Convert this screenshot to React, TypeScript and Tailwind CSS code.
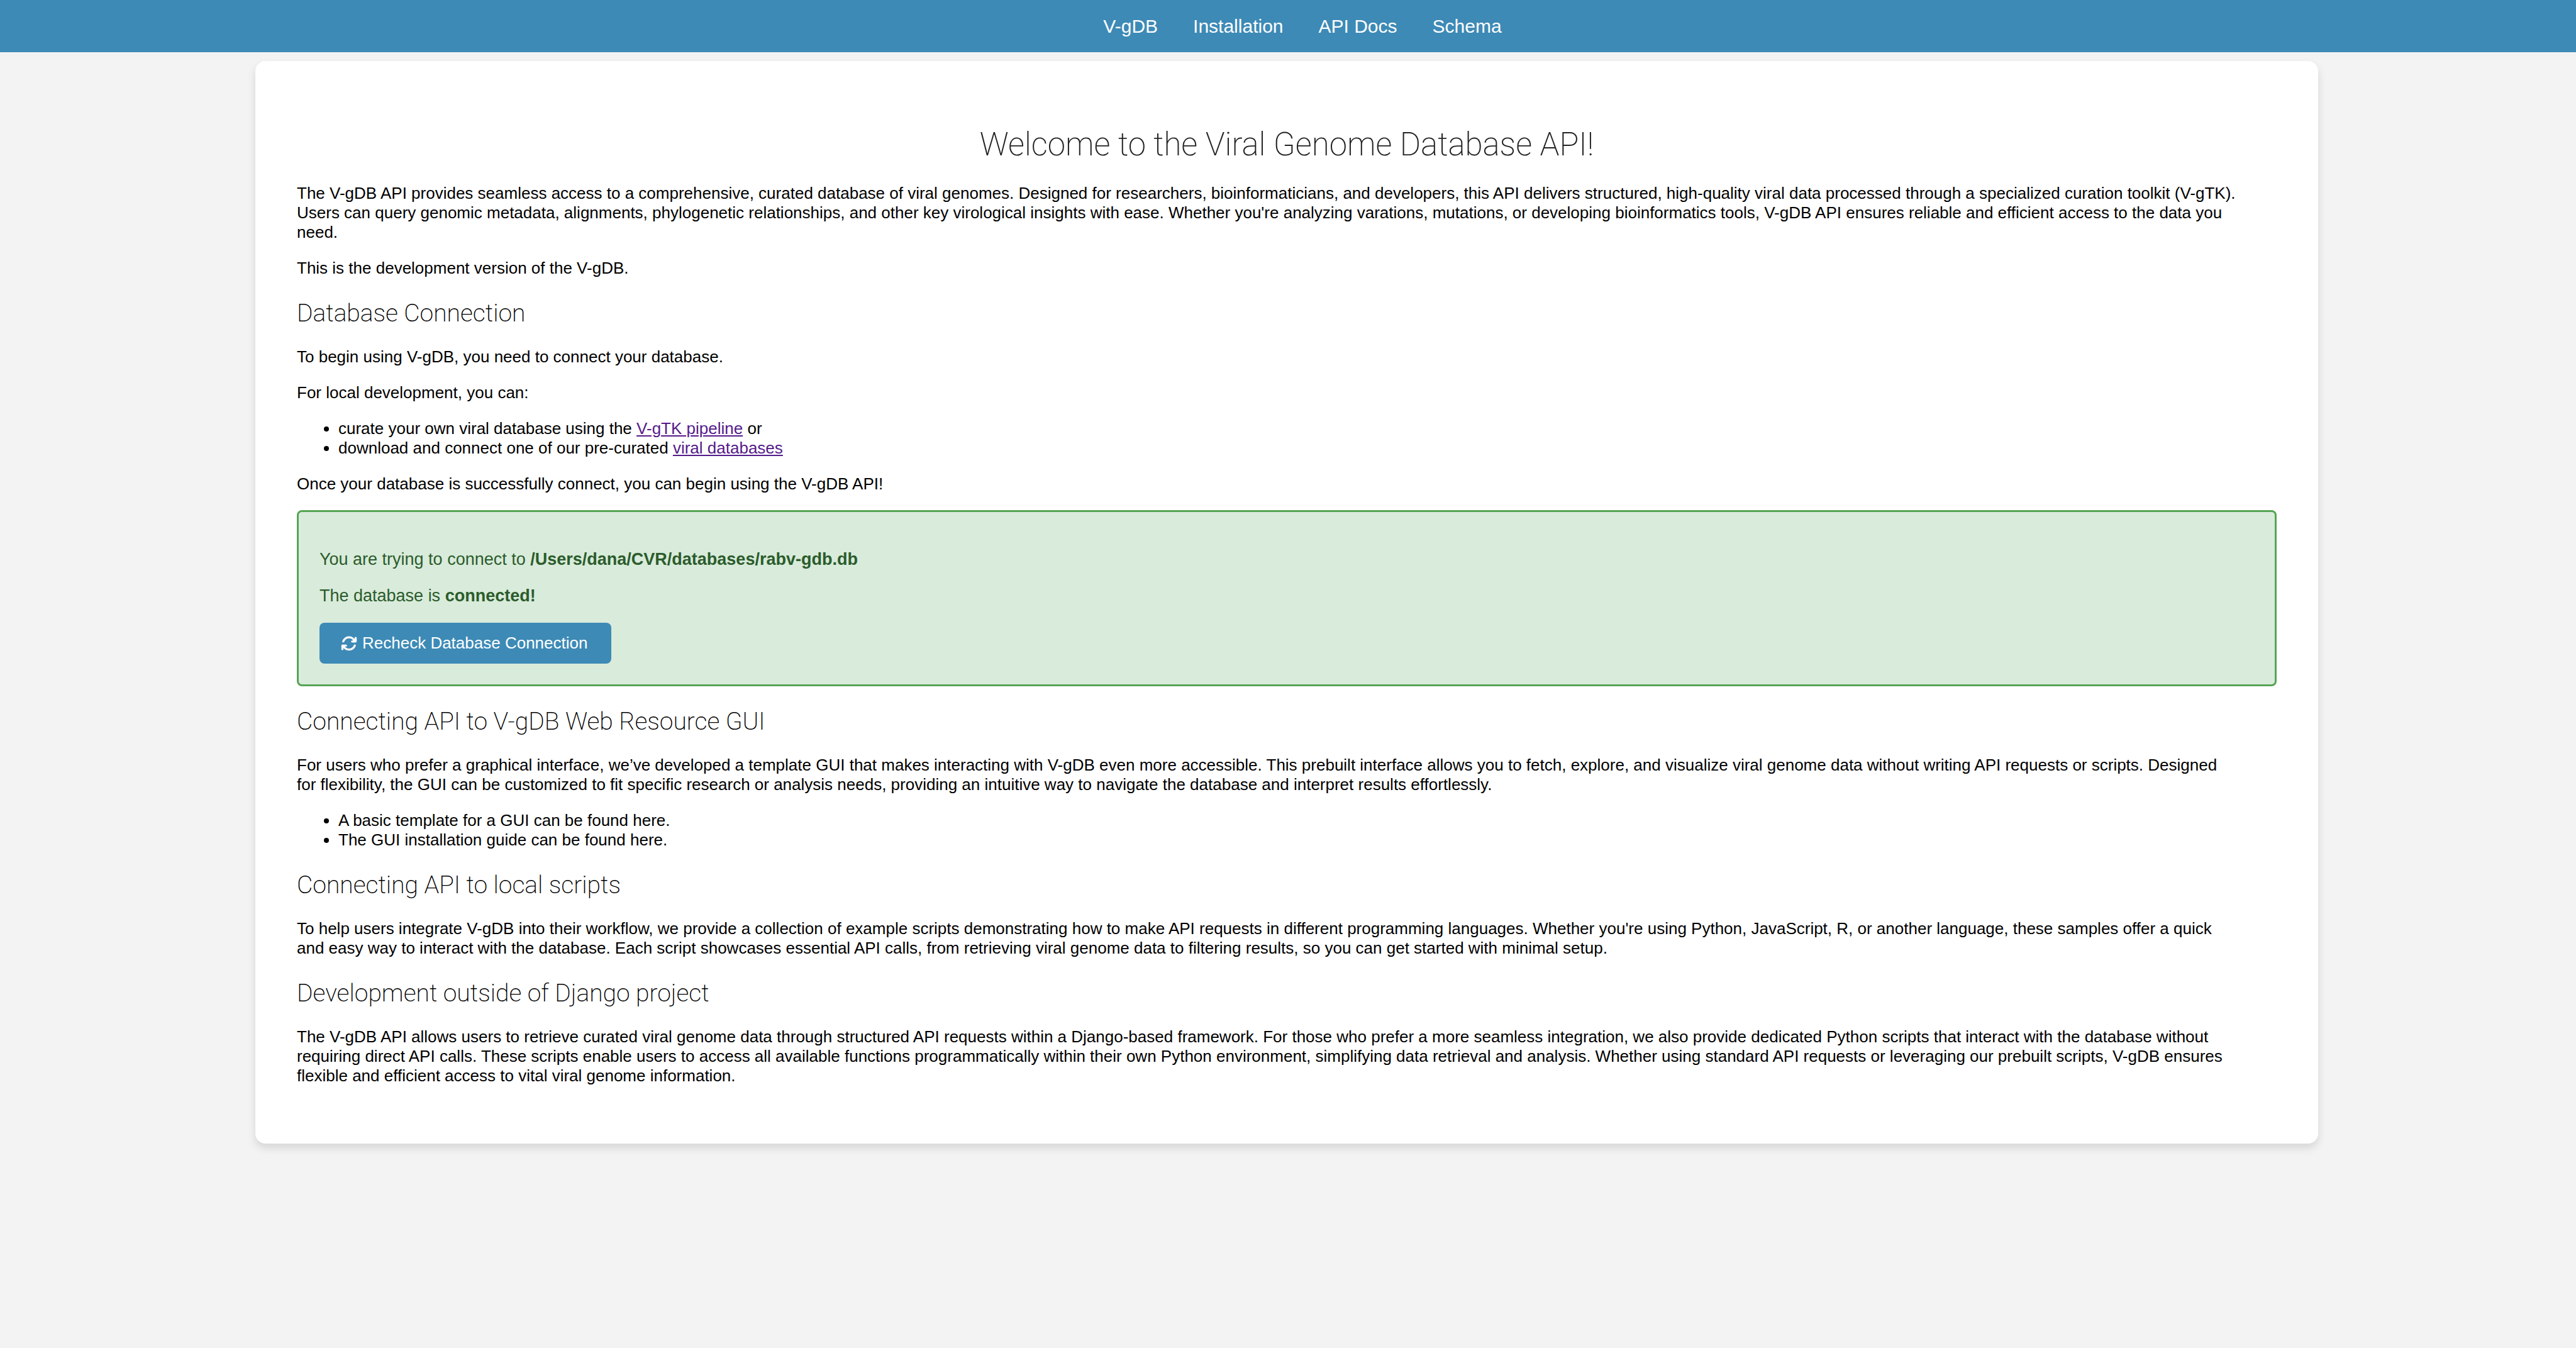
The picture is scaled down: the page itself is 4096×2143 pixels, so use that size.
import type { ReactNode } from "react";
import { FaArrowsRotate } from "react-icons/fa6";

const navLinks = ["V-gDB", "Installation", "API Docs", "Schema"];

function SectionTitle({ children }: { children: ReactNode }) {
  return (
    <h2 className="mt-[33px] mb-[31px] font-['Roboto'] text-[39px] leading-[46px] font-extralight">{children}</h2>
  );
}

function Paragraph({ children }: { children: ReactNode }) {
  return <p className="my-[26px] pr-[60px]">{children}</p>;
}

function BulletList({ children }: { children: ReactNode }) {
  return <ul className="my-[26px] list-disc pl-[66px]">{children}</ul>;
}

function NavBar() {
  return (
    <nav className="h-[83px] bg-[#3d8ab6] pl-[46px]">
      <ul className="flex h-full items-center justify-center gap-[56px] text-[30px] leading-[34px] text-white">
        {navLinks.map((label) => (
          <li key={label}>
            <a href="#">{label}</a>
          </li>
        ))}
      </ul>
    </nav>
  );
}

function ConnectionStatus() {
  return (
    <section className="my-[26px] flow-root rounded-[8px] border-[3px] border-[#55a555] bg-[#d9ebdb] p-[33px] text-[27px] text-[#2b5c2b]">
      <p className="my-[27px]">
        You are trying to connect to <strong>/Users/dana/CVR/databases/rabv-gdb.db</strong>
      </p>
      <p className="my-[27px]">
        The database is <strong>connected!</strong>
      </p>
      <button
        type="button"
        className="flex h-[65px] items-center gap-[8px] rounded-[8px] bg-[#3d8ab6] pr-[38px] pl-[34px] text-[26px] leading-[31px] text-white"
      >
        <FaArrowsRotate aria-hidden="true" className="size-[26px]" />
        Recheck Database Connection
      </button>
    </section>
  );
}

export default function App() {
  return (
    <div className="min-h-screen bg-[#f3f3f3] font-['Liberation_Sans',sans-serif] text-[26px] leading-[31px] text-black">
      <NavBar />
      <main className="pt-[14px] pr-[410px] pl-[406px]">
        <article className="flow-root rounded-[16px] bg-white p-[66px] shadow-[0_7px_14px_rgba(0,0,0,0.12)]">
          <h1 className="mt-[36px] mb-[31px] text-center font-['Roboto'] text-[51px] leading-[62px] font-extralight text-[#222222]">
            Welcome to the Viral Genome Database API!
          </h1>
          <Paragraph>
            The V-gDB API provides seamless access to a comprehensive, curated database of viral genomes. Designed for
            researchers, bioinformaticians, and developers, this API delivers structured, high-quality viral data
            processed through a specialized curation toolkit (V-gTK). Users can query genomic metadata, alignments,
            phylogenetic relationships, and other key virological insights with ease. Whether you're analyzing
            varations, mutations, or developing bioinformatics tools, V-gDB API ensures reliable and efficient access to
            the data you need.
          </Paragraph>
          <Paragraph>This is the development version of the V-gDB.</Paragraph>

          <SectionTitle>Database Connection</SectionTitle>
          <Paragraph>To begin using V-gDB, you need to connect your database.</Paragraph>
          <Paragraph>For local development, you can:</Paragraph>
          <BulletList>
            <li>
              curate your own viral database using the{" "}
              <a href="#" className="text-[#551a8b] underline">
                V-gTK pipeline
              </a>{" "}
              or
            </li>
            <li>
              download and connect one of our pre-curated{" "}
              <a href="#" className="text-[#551a8b] underline">
                viral databases
              </a>
            </li>
          </BulletList>
          <Paragraph>Once your database is successfully connect, you can begin using the V-gDB API!</Paragraph>
          <ConnectionStatus />

          <SectionTitle>Connecting API to V-gDB Web Resource GUI</SectionTitle>
          <Paragraph>
            For users who prefer a graphical interface, we’ve developed a template GUI that makes interacting with V-gDB
            even more accessible. This prebuilt interface allows you to fetch, explore, and visualize viral genome data
            without writing API requests or scripts. Designed for flexibility, the GUI can be customized to fit specific
            research or analysis needs, providing an intuitive way to navigate the database and interpret results
            effortlessly.
          </Paragraph>
          <BulletList>
            <li>A basic template for a GUI can be found here.</li>
            <li>The GUI installation guide can be found here.</li>
          </BulletList>

          <SectionTitle>Connecting API to local scripts</SectionTitle>
          <Paragraph>
            To help users integrate V-gDB into their workflow, we provide a collection of example scripts demonstrating
            how to make API requests in different programming languages. Whether you're using Python, JavaScript, R, or
            another language, these samples offer a quick and easy way to interact with the database. Each script
            showcases essential API calls, from retrieving viral genome data to filtering results, so you can get
            started with minimal setup.
          </Paragraph>

          <SectionTitle>Development outside of Django project</SectionTitle>
          <Paragraph>
            The V-gDB API allows users to retrieve curated viral genome data through structured API requests within a
            Django-based framework. For those who prefer a more seamless integration, we also provide dedicated Python
            scripts that interact with the database without requiring direct API calls. These scripts enable users to
            access all available functions programmatically within their own Python environment, simplifying data
            retrieval and analysis. Whether using standard API requests or leveraging our prebuilt scripts, V-gDB
            ensures flexible and efficient access to vital viral genome information.
          </Paragraph>
        </article>
      </main>
    </div>
  );
}
